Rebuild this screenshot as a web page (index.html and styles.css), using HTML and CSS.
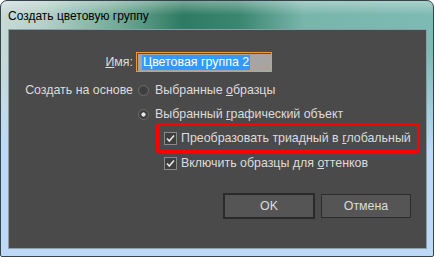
FILE: index.html
```html
<!DOCTYPE html>
<html lang="ru">
<head>
  <meta charset="UTF-8">
  <title>Создать цветовую группу</title>
  <link rel="stylesheet" href="styles.css">
</head>
<body>

<div class="window">
  <div class="titlebar">Создать цветовую группу</div>

  <div class="content">
    <div class="row row-name">
      <label class="label"><u>И</u>мя:</label>
      <div class="input"><span class="selected">Цветовая группа 2</span></div>
    </div>

    <div class="row row-radio">
      <span class="label">Создать на основе</span>
      <span class="radio"></span>
      <span class="text">Выбранные <u>о</u>бразцы</span>
    </div>

    <div class="row row-radio">
      <span class="label"></span>
      <span class="radio checked"></span>
      <span class="text">Выбранный <u>г</u>рафический объект</span>
    </div>

    <div class="highlight">
      <div class="check-row">
        <svg class="checkbox" width="13" height="13" viewBox="0 0 13 13">
          <rect x="0.5" y="0.5" width="12" height="12" fill="#3e3e3e" stroke="#8a8a8a"/>
          <path d="M3 6.5 L5.3 9 L10 3.5" fill="none" stroke="#e6e6e6" stroke-width="1.6"/>
        </svg>
        <span class="text">Преобразовать триадный в <u>г</u>лобальный</span>
      </div>
    </div>

    <div class="check-row second">
      <svg class="checkbox" width="13" height="13" viewBox="0 0 13 13">
        <rect x="0.5" y="0.5" width="12" height="12" fill="#3e3e3e" stroke="#8a8a8a"/>
        <path d="M3 6.5 L5.3 9 L10 3.5" fill="none" stroke="#e6e6e6" stroke-width="1.6"/>
      </svg>
      <span class="text">Включить образцы для <u>о</u>ттенков</span>
    </div>

    <div class="buttons">
      <button class="btn default">OK</button>
      <button class="btn">Отмена</button>
    </div>
  </div>
</div>

</body>
</html>
```

FILE: styles.css
```css
body {
  margin: 0;
  width: 435px;
  height: 257px;
  overflow: hidden;
  background: #ffffff;
  font-family: "Liberation Sans", Arial, sans-serif;
  font-size: 12px;
}
.window {
  box-sizing: border-box;
  width: 434px;
  height: 257px;
  padding: 0 6px 7px 7px;
  border: 1px solid #34444a;
  border-radius: 7px 7px 2px 2px;
  background:
    linear-gradient(to bottom, rgba(255,255,255,0.35) 0, rgba(255,255,255,0) 14px),
    linear-gradient(to bottom, rgba(189,217,247,0) 0, rgba(189,217,247,0) 50px, #bdd9f7 150px),
    linear-gradient(to right, #c9dad6 0, #b4d0c8 10%, #6ea894 28%, #2e7a62 42%, #3a866e 55%, #78b5ab 70%, #7dbab3 100%);
}
.titlebar {
  height: 28px;
  line-height: 31px;
  color: #000000;
  white-space: nowrap;
}
.content {
  box-sizing: border-box;
  height: 220px;
  padding-top: 22px;
  background: #4a4a4a;
  border: 1px solid #8aa0a8;
  color: #dcdcdc;
  font-size: 12.4px;
}
.row {
  display: flex;
  align-items: center;
}
.label {
  width: 124px;
  flex-shrink: 0;
  text-align: right;
}
.row-name {
  height: 20px;
  margin-bottom: 6px;
}
.row-name .label {
  margin-right: 3px;
}
.input {
  box-sizing: border-box;
  width: 136px;
  height: 20px;
  padding: 2px 0 0 5px;
  background: #a5a5a5;
  border: 1px solid #f39a2c;
  box-shadow: inset 1px 1px 0 #505050;
}
.selected {
  display: inline-block;
  padding: 0 1px;
  line-height: 15px;
  background: #3399ff;
  color: #ffffff;
  white-space: nowrap;
}
.row-radio {
  height: 24px;
}
.radio {
  box-sizing: border-box;
  width: 11px;
  height: 11px;
  margin: 0 6px 0 5px;
  border-radius: 50%;
  border: 1px solid #6c6c6c;
  background: radial-gradient(circle, #3c3c3c 0, #444444 100%);
  flex-shrink: 0;
}
.radio.checked {
  background: radial-gradient(circle, #e8e8e8 0, #e8e8e8 1.8px, #3c3c3c 2.4px, #444444 100%);
}
.text {
  white-space: nowrap;
}
.highlight {
  box-sizing: border-box;
  width: 264px;
  height: 30px;
  margin: -3px 0 0 147px;
  border: 3px solid #ff0000;
  border-radius: 3px;
  display: flex;
  align-items: center;
}
.check-row {
  display: flex;
  align-items: center;
  padding-left: 5px;
}
.check-row.second {
  height: 20px;
  padding-left: 155px;
}
.checkbox {
  margin-right: 4px;
  flex-shrink: 0;
}
.buttons {
  display: flex;
  justify-content: flex-end;
  align-items: center;
  gap: 6px;
  margin-top: 20px;
  padding-right: 15px;
}
.btn {
  box-sizing: border-box;
  width: 90px;
  height: 24px;
  padding: 0;
  background: #555555;
  border: 1px solid #2c2c2c;
  color: #dcdcdc;
  font-family: "Liberation Sans", Arial, sans-serif;
  font-size: 12.4px;
}
.btn.default {
  width: 92px;
  height: 26px;
  border: 2px solid #2a2a2a;
}
```
